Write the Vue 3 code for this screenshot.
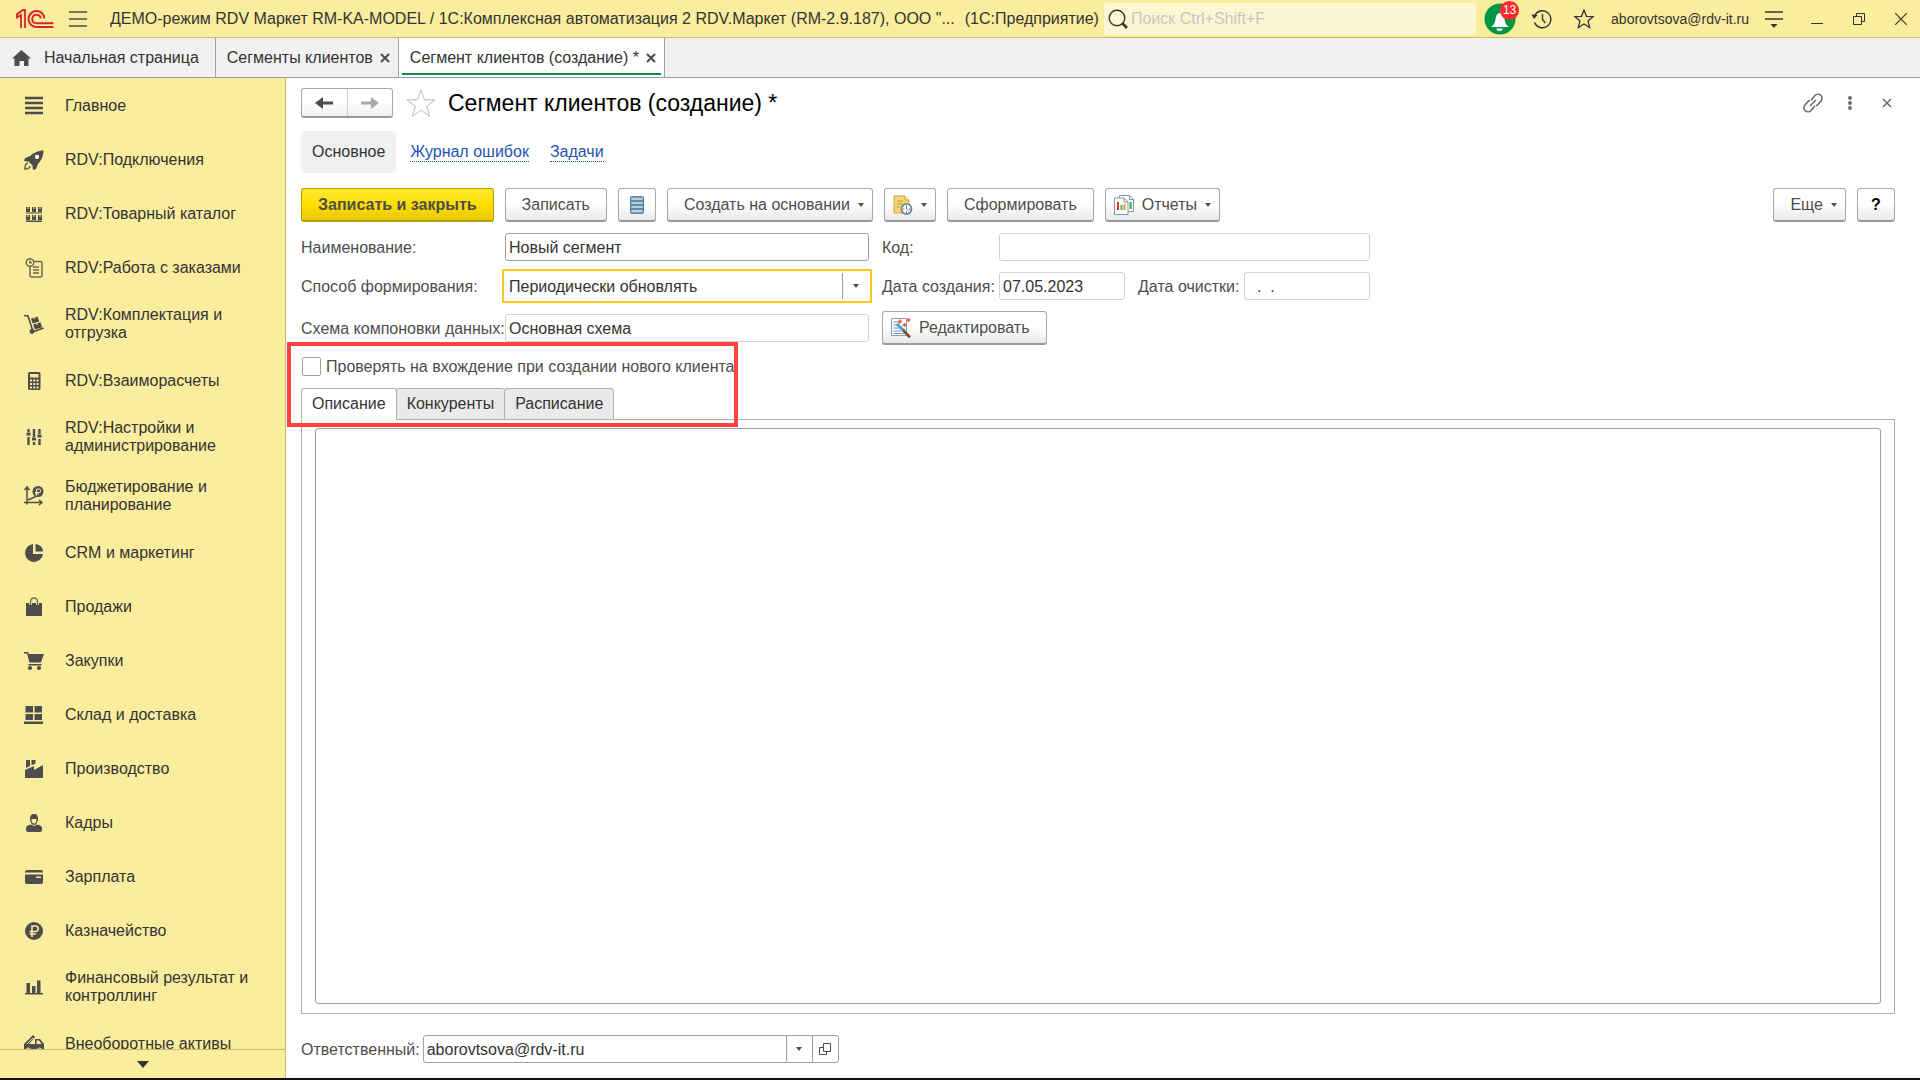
<script setup>
import { ref } from "vue";

const sections = [
  {
    title: "Главное",
    icon: '<path d="M1 2h18M1 7h18M1 12h18M1 17h18" stroke="#4d4d4d" stroke-width="2.6"/>',
  },
  {
    title: "RDV:Подключения",
    icon: '<path fill-rule="evenodd" d="M19.500 0.500C14 0.500 9 3 6 6L1 8l-1 3 4.500 0.500 4 4L9 20l3-1 2-5c3-3 5.500-8 5.500-13.500zM13 4.700a2.100 2.100 0 1 1 0 4.200 2.100 2.100 0 0 1 0-4.200z"/><circle cx="13" cy="6.800" r="1.900" fill="#fff"/><path d="M4 13c-2 0-3 2-3 6 3 0 5-1 5-3" fill="none" stroke="#6d684f" stroke-width="1.600"/>',
  },
  {
    title: "RDV:Товарный каталог",
    icon: '<path d="M2 3h4v5H2zM8 3h4v5H8zM14 3h4v5h-4zM2 11h4v5H2zM8 11h4v5H8zM14 11h4v5h-4z"/><path d="M2 8.500h16v1H2zM2 16.500h16v1.500H2z"/><path d="M3.500 3h1v2h-1zM9.500 3h1v2h-1zM15.500 3h1v2h-1zM3.500 11h1v2h-1zM9.500 11h1v2h-1zM15.500 11h1v2h-1z" fill="#fbed9e"/>',
  },
  {
    title: "RDV:Работа с заказами",
    icon: '<g fill="none" stroke="#6d684f" stroke-width="1.500"><circle cx="6" cy="4.500" r="3.800"/><path d="M6 2.500v2.300h2M10 3.500h6.500a1.500 1.500 0 0 1 1.500 1.500v12.500a1.500 1.500 0 0 1-1.500 1.500h-9A1.500 1.500 0 0 1 6 17.500V9M9 9h6M9 12h6M9 15h6"/></g>',
  },
  {
    title: "RDV:Комплектация и отгрузка",
    icon: '<path d="M0 1.500l4 0.500 5 15.500" fill="none" stroke="#4d4d4d" stroke-width="1.600"/><circle cx="8" cy="17.500" r="2.400"/><path d="M10 17.500l9.500-3.500" stroke="#4d4d4d" stroke-width="1.800"/><path d="M7 4.500l6.500-2 1.700 5-6.500 2zM9.200 10.500l7.300-2.300 1.700 5-7.300 2.300z"/><path d="M9.500 4.500l2-0.700M12 10.300l2-0.700" stroke="#fbed9e"/>',
  },
  {
    title: "RDV:Взаиморасчеты",
    icon: '<rect x="4" y="1" width="12.500" height="18" rx="1.500"/><path d="M6 3h8.500v3.500H6zM6 8.500h2v2H6zM9.200 8.500h2v2h-2zM12.500 8.500h2v2h-2zM6 12h2v2H6zM9.200 12h2v2h-2zM12.500 12h2v2h-2zM6 15.500h2v2H6zM9.200 15.500h2v2h-2zM12.500 15.500h2v2h-2z" fill="#fbed9e"/>',
  },
  {
    title: "RDV:Настройки и администрирование",
    icon: '<path d="M4.500 2v3M4.500 10v8M10 2v8M10 15v3M15.500 2v5M15.500 12v6" stroke="#4d4d4d" stroke-width="2.400"/><path d="M2.500 5.500h4v3h-4zM8 10.500h4v3H8zM13.500 7.500h4v3h-4z"/>',
  },
  {
    title: "Бюджетирование и планирование",
    icon: '<path d="M3 1v17.500M0 16.500h18M0.500 4L3 1l2.500 3M15 14l3 2.500-3 2.500M4 14l9-4" fill="none" stroke="#4d4d4d" stroke-width="1.500"/><circle cx="14" cy="5.500" r="5.500"/><path d="M12.500 9.500V3h2.500a1.600 1.600 0 0 1 0 3.500h-4M11 8h4" fill="none" stroke="#fbed9e"/>',
  },
  {
    title: "CRM и маркетинг",
    icon: '<path d="M9 1v10h10a9 9 0 1 1-10-10z"/><path d="M11.500 1a8 8 0 0 1 7.500 7.500h-7.500z"/>',
  },
  {
    title: "Продажи",
    icon: '<path d="M2 6h16v13H2z"/><path d="M6.500 8V4.500a3.500 3.500 0 0 1 7 0V8" fill="none" stroke="#fbed9e" stroke-width="3"/><path d="M6.500 8V4.500a3.500 3.500 0 0 1 7 0V8" fill="none" stroke="#6d684f" stroke-width="1.400"/>',
  },
  {
    title: "Закупки",
    icon: '<path d="M0 1h4l0.700 2H20l-3 8.500H5.500L3 2.500H0z"/><path d="M4.500 13h13v1.500h-13z"/><circle cx="6" cy="17" r="2.100"/><circle cx="15" cy="17" r="2.100"/>',
  },
  {
    title: "Склад и доставка",
    icon: '<path d="M1.500 1h7.500v6.500H1.500zM10.500 1H18v6.500h-7.500zM1.500 9h7.500v6H1.500zM10.500 9H18v6h-7.500zM0 16.500h19V19H0z"/>',
  },
  {
    title: "Производство",
    icon: '<path d="M1 19v-8l9-4v4l9-5v13zM2 1h4v6L2 9zM7.500 1h4v3.500l-4 1.700z"/>',
  },
  {
    title: "Кадры",
    icon: '<path d="M2 17v-2c0-2 2-3 5-3.500l3 1.500 3-1.500c3 0.500 5 1.500 5 3.500v2q0 2-2 2H4q-2 0-2-2z"/><path d="M6 6.500C6 3 7 1 10 1s4 2 4 5.500l-1 3c-0.500 1.500-1.500 2.500-3 2.500s-2.500-1-3-2.500z"/><path d="M7.500 6h5c0 2.500-0.500 4.500-2.500 4.500S7.500 8.500 7.500 6z" fill="#fbed9e"/>',
  },
  {
    title: "Зарплата",
    icon: '<path d="M1 5q0-2 2-2h14q2 0 2 2v0.500H1z"/><path fill-rule="evenodd" d="M1 7.500h18V15q0 2-2 2H3q-2 0-2-2zM12 9.500v1.500h5V9.500z"/>',
  },
  {
    title: "Казначейство",
    icon: '<circle cx="10" cy="10" r="9"/><path d="M8 16V5h4a2.800 2.800 0 0 1 0 5.500H5.500M5.500 13H12" fill="none" stroke="#fbed9e" stroke-width="1.600"/>',
  },
  {
    title: "Финансовый результат и контроллинг",
    icon: '<path d="M2.500 6h3.500v10H2.500zM8 9h3.500v7H8zM13 3.500h3.500V16H13zM1 16h18v1.500H1z"/>',
  },
  {
    title: "Внеоборотные активы",
    icon: '<path d="M0 10l9-9 2 2-6 7h6V5h5l4 5v6h-2a2.500 2.500 0 0 0-5 0H7a2.500 2.500 0 0 0-5 0H0z"/><path d="M12.500 6.500h2.500l2.500 3.500h-5z" fill="#fbed9e"/><path d="M3 10l6-6" stroke="#fbed9e"/><circle cx="4.500" cy="16.500" r="2"/><circle cx="15.500" cy="16.500" r="2"/>',
  },
];

const pages = ["Описание", "Конкуренты", "Расписание"];
const activePage = ref("Описание");

const name = ref("Новый сегмент");
const code = ref("");
const method = ref("Периодически обновлять");
const scheme = ref("Основная схема");
const created = ref("07.05.2023");
const cleared = ref("  .  .");
const checkNew = ref(false);
const description = ref("");
const responsible = ref("aborovtsova@rdv-it.ru");
const search = ref("");
</script>

<template>
  <div class="app">
    <header class="title-bar">
      <svg class="logo" viewBox="0 0 38 20" width="38" height="20">
        <g fill="none" stroke="#d8232a" stroke-width="2">
          <path d="M1 5.500l3.500-2.500M5 19V6L1 8.500V5l6-4h2v18" stroke-width="1.800" />
          <path d="M28.500 9.500A8 8 0 1 0 21 18h16.500" />
          <path d="M24.800 9.500A4.300 4.300 0 1 0 21 14.300h16.500" />
        </g>
      </svg>
      <button class="plain burger" aria-label="Меню">
        <svg viewBox="0 0 18 16" width="18" height="16">
          <path d="M0 1h18M0 8h18M0 15h18" stroke="#4d4d4d" stroke-width="1.500" />
        </svg>
      </button>
      <span class="app-name"
        >ДЕМО-режим RDV Маркет RM-KA-MODEL / 1С:Комплексная автоматизация 2
        RDV.Маркет (RM-2.9.187), ООО "...</span
      >
      <span class="platform">(1С:Предприятие)</span>
      <label class="search">
        <svg viewBox="0 0 20 20" width="20" height="20">
          <circle cx="9" cy="9" r="7.800" fill="none" stroke="#333" stroke-width="1.400" />
          <path d="M14 14l5 5" stroke="#333" stroke-width="2.600" />
        </svg>
        <input v-model="search" type="text" placeholder="Поиск Ctrl+Shift+F" />
      </label>
      <button class="plain bell" aria-label="Оповещения">
        <svg viewBox="0 0 32 32" width="32" height="32">
          <circle cx="16" cy="16" r="15.500" fill="#009646" />
          <path
            d="M7 24c3-2 4-4 4.500-8 0.500-4 2-6 4.500-6s4 2 4.500 6c0.500 4 1.500 6 4.500 8zM12.500 25.500h6a3 2.500 0 0 1-6 0z"
            fill="#fff"
          />
        </svg>
        <span class="badge">13</span>
      </button>
      <button class="plain history" aria-label="История">
        <svg viewBox="0 0 22 20" width="22" height="20">
          <g fill="none" stroke="#333" stroke-width="1.400">
            <path d="M3.500 7a8.500 8.500 0 1 1 0 6.500" />
            <path d="M11.500 5v5.500l3 3.500" />
          </g>
          <path d="M0.500 5.500l6 0.500-3.500 4z" fill="#333" />
        </svg>
      </button>
      <button class="plain favorite" aria-label="Избранное">
        <svg viewBox="0 0 20 20" width="20" height="20">
          <path
            d="M10 1l2.500 6.300 6.500 0.400-5 4.200 1.700 6.600L10 14.900l-5.700 3.600L6 11.900 1 7.700l6.500-0.400z"
            fill="none"
            stroke="#333"
            stroke-width="1.300"
          />
        </svg>
      </button>
      <span class="user">aborovtsova@rdv-it.ru</span>
      <button class="plain service" aria-label="Сервис">
        <svg viewBox="0 0 18 18" width="18" height="18">
          <path d="M0 2h18M0 9h18" stroke="#333" stroke-width="1.500" />
          <path d="M5.500 14h7L9 18z" fill="#333" />
        </svg>
      </button>
      <div class="window-buttons">
        <button class="plain" aria-label="Свернуть">
          <svg viewBox="0 0 12 12" width="12" height="12">
            <path d="M0 10.500h12" stroke="#333" />
          </svg>
        </button>
        <button class="plain" aria-label="Восстановить">
          <svg viewBox="0 0 12 12" width="12" height="12">
            <path d="M0.500 3.500h8v8h-8zM3.500 3.500v-3h8v8h-3" fill="none" stroke="#333" />
          </svg>
        </button>
        <button class="plain" aria-label="Закрыть">
          <svg viewBox="0 0 12 12" width="12" height="12">
            <path d="M0 0l12 12M12 0L0 12" stroke="#333" stroke-width="1.200" />
          </svg>
        </button>
      </div>
    </header>

    <nav class="tabs">
      <button class="plain tab home">
        <svg viewBox="0 0 19 16" width="19" height="16">
          <path d="M9.500 0L19 8.500h-2.500V16H12v-5H7.500v5H2.500V8.500H0z" fill="#4d4d4d" />
        </svg>
        Начальная страница
      </button>
      <button class="plain tab">
        Сегменты клиентов
        <svg viewBox="0 0 10 10" width="10" height="10">
          <path d="M1 1l8 8M9 1L1 9" stroke="#4d4d4d" stroke-width="2" />
        </svg>
      </button>
      <button class="plain tab current">
        Сегмент клиентов (создание) *
        <svg viewBox="0 0 10 10" width="10" height="10">
          <path d="M1 1l8 8M9 1L1 9" stroke="#4d4d4d" stroke-width="2" />
        </svg>
      </button>
    </nav>

    <div class="body">
      <aside class="sidebar">
        <ul>
          <li v-for="item in sections" :key="item.title">
            <a href="#" class="section">
              <svg viewBox="0 0 20 20" width="20" height="20" v-html="item.icon"></svg>
              <span>{{ item.title }}</span>
            </a>
          </li>
        </ul>
        <button class="plain more" aria-label="Прокрутить вниз">
          <svg viewBox="0 0 12 7" width="12" height="7">
            <path d="M0 0h12L6 7z" fill="#333" />
          </svg>
        </button>
      </aside>

      <main class="form">
        <div class="form-header">
          <div class="arrows">
            <button class="plain" aria-label="Назад">
              <svg viewBox="0 0 18 14" width="18" height="14">
                <path d="M18 5.500H8V1L0 7l8 6V8.500h10z" fill="#4d4d4d" />
              </svg>
            </button>
            <button class="plain" aria-label="Вперед">
              <svg viewBox="0 0 18 14" width="18" height="14">
                <path d="M0 5.500h10V1l8 6-8 6V8.500H0z" fill="#aaa" />
              </svg>
            </button>
          </div>
          <button class="plain" aria-label="В избранное">
            <svg viewBox="0 0 30 28" width="30" height="28">
              <path
                d="M15 1l3.500 9.700 10.500 0.300-8.400 6.300 3 9.900L15 21.300l-8.600 5.900 3-9.900L1 11l10.500-0.300z"
                fill="none"
                stroke="#b4bac0"
              />
            </svg>
          </button>
          <h1>Сегмент клиентов (создание) *</h1>
          <div class="header-tools">
            <button class="plain" aria-label="Ссылка">
              <svg viewBox="0 0 20 20" width="20" height="20">
                <g fill="none" stroke="#666" stroke-width="1.500">
                  <path d="M8.500 7.500V6.500l3.500-4a4 4 0 0 1 6 5.500l-3.500 4-1.500 0.500" />
                  <path d="M11.500 12.500v1l-3.500 4a4 4 0 0 1-6-5.500L5.500 8l1.500-0.500" />
                  <path d="M7 13l6-6" />
                </g>
              </svg>
            </button>
            <button class="plain" aria-label="Еще действия">
              <svg viewBox="0 0 4 14" width="4" height="14">
                <g fill="#666">
                  <circle cx="2" cy="2" r="1.900" />
                  <circle cx="2" cy="7" r="1.900" />
                  <circle cx="2" cy="12" r="1.900" />
                </g>
              </svg>
            </button>
            <button class="plain" aria-label="Закрыть форму">
              <svg viewBox="0 0 10 10" width="10" height="10">
                <path d="M1 1l8 8M9 1L1 9" stroke="#666" stroke-width="1.500" />
              </svg>
            </button>
          </div>
        </div>

        <nav class="form-nav">
          <span class="chosen">Основное</span>
          <a href="#">Журнал ошибок</a>
          <a href="#">Задачи</a>
        </nav>

        <div class="toolbar">
          <button class="btn primary">Записать и закрыть</button>
          <button class="btn">Записать</button>
          <button class="btn square" aria-label="Список">
            <svg viewBox="0 0 14 18" width="14" height="18">
              <rect x="0.500" y="0.500" width="13" height="17" rx="1" fill="#7ba0bb" stroke="#5f8199" />
              <path d="M1.500 3h11M1.500 7h11M1.500 11h11M1.500 15h11" stroke="#c9e0ee" stroke-width="1.500" />
              <path d="M0 5h14M0 9h14M0 13h14" stroke="#4f7590" />
            </svg>
          </button>
          <button class="btn">Создать на основании <i class="caret"></i></button>
          <button class="btn with-icon" aria-label="Напоминание">
            <svg viewBox="0 0 20 20" width="20" height="20">
              <path d="M1 1h11l4 4v13H1z" fill="#f3d372" stroke="#d0a640" />
              <path d="M12 1v4h4" fill="#fff0b8" stroke="#d0a640" />
              <path d="M4 6h6M4 9h6M4 12h3" stroke="#c79b35" />
              <circle cx="13.500" cy="14" r="5" fill="#fff" stroke="#5b82b0" stroke-width="1.700" />
              <path d="M13.500 10.500v3.500l2 2" fill="none" stroke="#5b82b0" />
              <path d="M9.800 14h1.500M16 14h1.500M13.500 16.500V18" stroke="#e33" />
            </svg>
            <i class="caret"></i>
          </button>
          <button class="btn">Сформировать</button>
          <button class="btn with-icon">
            <svg viewBox="0 0 20 20" width="20" height="20">
              <path d="M5.500 0.500h10l4 4v12h-14z" fill="#fff" stroke="#8496a6" />
              <path d="M15.500 0.500v4h4M17 7v7" fill="none" stroke="#8496a6" />
              <path d="M0.500 3h9.500l4 4v12.500H0.500z" fill="#fff" stroke="#8496a6" />
              <path d="M10 3v4h4" fill="none" stroke="#8496a6" />
              <path d="M4 15V7" stroke="#e8342c" stroke-width="2" />
              <path d="M7.500 15v-5M16.500 14V7" stroke="#41b649" stroke-width="2" />
              <path d="M10.500 15V9" stroke="#e88a52" stroke-width="2" />
            </svg>
            Отчеты <i class="caret"></i>
          </button>
          <span class="spacer"></span>
          <button class="btn">Еще <i class="caret"></i></button>
          <button class="btn square help">?</button>
        </div>

        <div class="fields">
          <label for="name">Наименование:</label>
          <input id="name" v-model="name" type="text" />
          <label for="code" class="second">Код:</label>
          <input id="code" v-model="code" type="text" class="light" />

          <label for="method">Способ формирования:</label>
          <div class="combo focused">
            <select id="method" v-model="method">
              <option>Периодически обновлять</option>
              <option>Формировать вручную</option>
            </select>
            <span class="drop"><i class="caret"></i></span>
          </div>
          <label for="created" class="second">Дата создания:</label>
          <div class="dates">
            <input id="created" v-model="created" type="text" class="light" />
            <label for="cleared">Дата очистки:</label>
            <input id="cleared" v-model="cleared" type="text" class="light" />
          </div>

          <label for="scheme">Схема компоновки данных:</label>
          <input id="scheme" v-model="scheme" type="text" class="light" readonly />
          <div class="edit">
            <button class="btn with-icon">
              <svg viewBox="0 0 20 20" width="20" height="20">
                <path d="M0.500 0.500h15v17h-15z" fill="#fff" stroke="#8ba0b5" />
                <path d="M2.500 4h7M2.500 7h5M2.500 10h6M2.500 13h8M2.500 15.500h11" stroke="#7890a8" />
                <path d="M6 6l7 7" stroke="#3f9fe0" stroke-width="3" />
                <path d="M12 12l7 7.500" stroke="#7a5518" stroke-width="2.600" />
                <path d="M9 1.500v4M7 3.500h4M17.500 0v4M15.500 2h4M13.500 5v4M11.500 7h4" stroke="#ef5532" stroke-width="1.500" />
              </svg>
              Редактировать
            </button>
          </div>
        </div>

        <div class="marked">
          <label class="check">
            <input v-model="checkNew" type="checkbox" />
            Проверять на вхождение при создании нового клиента
          </label>
          <div class="pages">
            <button
              v-for="page in pages"
              :key="page"
              class="plain page"
              :class="{ active: page === activePage }"
              @click="activePage = page"
            >
              {{ page }}
            </button>
          </div>
          <div class="marker"></div>
        </div>

        <div class="panel">
          <textarea v-model="description" aria-label="Описание"></textarea>
        </div>

        <div class="footer">
          <label for="responsible">Ответственный:</label>
          <div class="combo">
            <select id="responsible" v-model="responsible">
              <option>aborovtsova@rdv-it.ru</option>
            </select>
            <span class="drop"><i class="caret"></i></span>
            <button class="plain open" aria-label="Открыть">
              <svg viewBox="0 0 12 12" width="12" height="12">
                <path d="M4.500 0.500h7v8h-7zM4.500 4.500h-4v7h7v-3" fill="none" stroke="#4d4d4d" />
              </svg>
            </button>
          </div>
        </div>
      </main>
    </div>
  </div>
</template>

<style>
body {
  margin: 0;
}
</style>

<style scoped>
.app {
  display: flex;
  flex-direction: column;
  height: 100vh;
  box-sizing: border-box;
  border-bottom: 2px solid #111;
  background: #fff;
  color: #333;
  font: 16px/18px "Liberation Sans", Arial, sans-serif;
  overflow: hidden;
}
.app *,
.app *::before,
.app *::after {
  box-sizing: border-box;
}
svg {
  display: block;
  flex: none;
}
button,
input,
select,
textarea {
  font: inherit;
  color: inherit;
  margin: 0;
}
.plain {
  display: flex;
  align-items: center;
  justify-content: center;
  padding: 0;
  border: 0;
  background: none;
  cursor: pointer;
}

/* title bar */
.title-bar {
  display: flex;
  align-items: center;
  flex: none;
  height: 38px;
  padding: 0 13px 0 16px;
  background: #fbed9e;
  border-bottom: 1px solid #c9b96a;
}
.burger {
  margin: 0 23px 0 15px;
}
.app-name {
  white-space: nowrap;
  overflow: hidden;
}
.platform {
  margin: 0 5px 0 10px;
  white-space: nowrap;
}
.search {
  display: flex;
  align-items: center;
  gap: 3px;
  flex: 1;
  min-width: 160px;
  height: 32px;
  padding-left: 4px;
  border-radius: 3px;
  background: #fdf6d3;
}
.search input {
  flex: 1;
  min-width: 0;
  border: 0;
  padding: 0;
  background: none;
  outline: none;
}
.search input::placeholder {
  color: #c6c6c6;
  opacity: 1;
}
.bell {
  position: relative;
  margin: 0 15px 0 8px;
}
.badge {
  position: absolute;
  top: -2px;
  right: -3px;
  width: 19px;
  height: 19px;
  border-radius: 50%;
  background: #ff2a2a;
  color: #fff;
  font-size: 12px;
  line-height: 19px;
}
.history {
  margin-right: 21px;
}
.favorite {
  margin-right: 17px;
}
.user {
  font-size: 14px;
}
.service {
  margin: 0 28px 0 16px;
}
.window-buttons {
  display: flex;
  gap: 30px;
}

/* open windows */
.tabs {
  display: flex;
  flex: none;
  height: 40px;
  background: #f1f1f1;
  border-bottom: 1px solid #a0a0a0;
}
.tab {
  position: relative;
  gap: 7px;
  padding: 0 8px 0 11px;
  border-right: 1px solid #a0a0a0;
  white-space: nowrap;
}
.tab.home {
  gap: 13px;
  padding: 0 16px 0 12px;
}
.tab.current {
  background: #fff;
}
.tab.current::after {
  content: "";
  position: absolute;
  left: 3px;
  right: 3px;
  bottom: 2px;
  height: 2px;
  background: #009646;
}

.body {
  display: flex;
  flex: 1;
  min-height: 0;
}

/* sections panel */
.sidebar {
  display: flex;
  flex-direction: column;
  flex: none;
  width: 286px;
  background: #fbed9e;
  border-right: 1px solid #c9b96a;
}
.sidebar ul {
  flex: 1;
  min-height: 0;
  margin: 0;
  padding: 0;
  list-style: none;
  overflow: hidden;
}
.section {
  display: flex;
  align-items: center;
  gap: 21px;
  min-height: 54px;
  padding: 12px 36px 11px 24px;
  color: #333;
  fill: #4d4d4d;
  text-decoration: none;
}
.more {
  flex: none;
  height: 29px;
  border-top: 1px solid #c9b96a;
}

/* form */
.form {
  display: flex;
  flex-direction: column;
  flex: 1;
  min-width: 0;
  padding: 10px 25px 15px 15px;
  color: #4d4d4d;
}
.form-header {
  display: flex;
  align-items: center;
  gap: 12px;
}
.arrows {
  display: flex;
  width: 92px;
  height: 30px;
  margin-right: 1px;
  border: 1px solid #a9a9a9;
  border-bottom: 2px solid #999;
  border-radius: 3px;
  background: linear-gradient(#fff 50%, #efefef);
}
.arrows button {
  flex: 1;
}
.arrows button + button {
  border-left: 1px solid #d0d0d0;
}
h1 {
  margin: 0;
  color: #000;
  font-size: 23px;
  line-height: 28px;
  font-weight: normal;
}
.header-tools {
  display: flex;
  margin: 0 -10px 0 auto;
}
.header-tools button {
  width: 37px;
}
.form-nav {
  display: flex;
  align-items: center;
  height: 42px;
  margin: 13px 0 15px;
}
.form-nav a {
  margin-right: 21px;
  border-bottom: 1px dotted #1f55b5;
  color: #1f55b5;
  line-height: 18px;
  text-decoration: none;
}
.chosen {
  margin-right: 14px;
  padding: 12px 11px;
  border-radius: 4px;
  background: #f1f1f1;
  color: #333;
}

.toolbar {
  display: flex;
  gap: 11px;
}
.spacer {
  flex: 1;
}
.btn {
  display: flex;
  align-items: center;
  justify-content: center;
  gap: 8px;
  height: 34px;
  padding: 0 16px;
  border: 1px solid #a9a9a9;
  border-bottom: 2px solid #999;
  border-radius: 3px;
  background: linear-gradient(#fff 50%, #e8e8e8);
  white-space: nowrap;
  cursor: pointer;
}
.btn:has(.caret) {
  padding-right: 8px;
}
.btn.with-icon {
  padding-left: 8px;
}
.btn.square {
  width: 38px;
  padding: 0;
}
.btn.primary {
  border-color: #b59c00;
  background: linear-gradient(#ffe733, #ffdf00 50%, #e6c800);
  font-weight: bold;
}
.btn.help {
  color: #000;
  font-weight: bold;
}
.caret {
  border: 3px solid transparent;
  border-top: 4px solid #4d4d4d;
  border-bottom: 0;
}

.fields {
  display: grid;
  grid-template-columns: 204px 364px 130px 371px;
  gap: 11px 0;
  align-items: center;
  margin-top: 11px;
}
.fields label,
.footer label {
  padding-top: 2px;
}
.fields .second,
.edit {
  padding-left: 13px;
}
.edit {
  grid-column: span 2;
  display: flex;
}
.fields input {
  width: 100%;
  min-width: 0;
  height: 28px;
  padding: 2px 3px 0;
  border: 1px solid #a0a0a0;
  border-radius: 3px;
  color: #333;
  outline: none;
}
.fields input.light {
  border-color: #d2d2d2;
}
.dates {
  display: grid;
  grid-template-columns: 126px 1fr 126px;
  align-items: center;
}
.dates label {
  padding-left: 13px;
}
.dates #cleared {
  white-space: pre;
}
.combo {
  display: flex;
  height: 28px;
  border: 1px solid #a0a0a0;
  border-radius: 3px;
  color: #333;
}
.combo.focused {
  border-color: transparent;
  border-radius: 0;
  outline: 2px solid #fccb19;
  outline-offset: 1px;
}
.combo select {
  flex: 1;
  min-width: 0;
  border: 0;
  padding: 2px 3px 0;
  background: none;
  appearance: none;
  outline: none;
}
.drop,
.open {
  display: flex;
  align-items: center;
  justify-content: center;
  width: 26px;
  border-left: 1px solid #a0a0a0;
}

.marked {
  position: relative;
  margin-top: 11px;
}
.check {
  display: flex;
  align-items: center;
  gap: 5px;
  height: 21px;
  padding-left: 1px;
  white-space: nowrap;
}
.check input {
  width: 19px;
  height: 19px;
  border: 1px solid #a0a0a0;
  border-radius: 2px;
  background: #fff;
  appearance: none;
}
.check input:checked {
  background: #ffdf00;
}
.pages {
  display: flex;
  margin-top: 11px;
}
.page {
  height: 32px;
  padding: 0 10px;
  margin-left: -1px;
  border: 1px solid #b0b0b0;
  border-radius: 3px 3px 0 0;
  background: #eaeaea;
  color: #333;
}
.page:first-child {
  margin-left: 0;
}
.page.active {
  z-index: 1;
  border-bottom-color: #fff;
  background: #fff;
}
.marker {
  position: absolute;
  top: -14px;
  left: -14px;
  width: 451px;
  height: 85px;
  z-index: 2;
  border: 4px solid #ff4141;
  pointer-events: none;
}
.panel {
  display: flex;
  flex: 1;
  min-height: 0;
  margin-top: -1px;
  padding: 8px 13px 9px;
  border: 1px solid #b0b0b0;
}
textarea {
  flex: 1;
  padding: 4px;
  border: 1px solid #a0a0a0;
  border-radius: 3px;
  resize: none;
  outline: none;
}
.footer {
  display: flex;
  align-items: center;
  gap: 3px;
  margin-top: 21px;
}
.footer .combo {
  width: 416px;
}
</style>
